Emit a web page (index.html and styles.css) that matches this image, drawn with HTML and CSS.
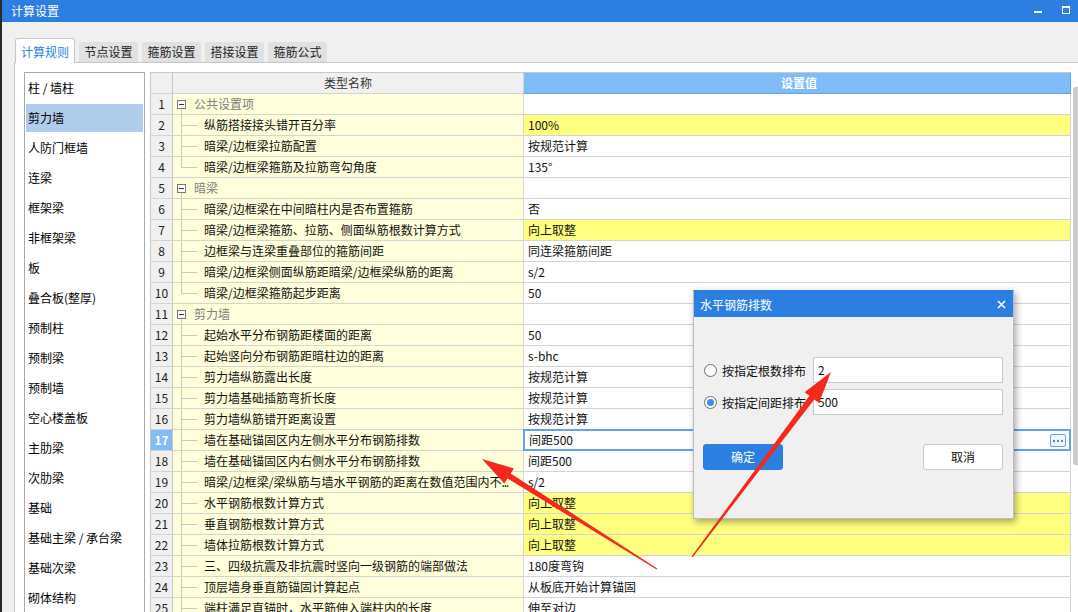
FILE: index.html
```html
<!DOCTYPE html>
<html lang="zh">
<head>
<meta charset="utf-8">
<title>计算设置</title>
<link rel="stylesheet" href="styles.css">
</head>
<body>
<div class="screen">
  <div class="edge"></div>
  <div class="window">
    <div class="titlebar">
      <span class="title">计算设置</span>
      <div class="winctl">
        <span class="min"></span>
        <span class="max"></span>
      </div>
    </div>
    <div class="client">
      <div class="tabs">
        <div class="tab active">计算规则</div>
        <div class="tab">节点设置</div>
        <div class="tab">箍筋设置</div>
        <div class="tab">搭接设置</div>
        <div class="tab">箍筋公式</div>
      </div>
      <div class="panel">
        <ul class="side">
          <li>柱 / 墙柱</li>
          <li class="sel">剪力墙</li>
          <li>人防门框墙</li>
          <li>连梁</li>
          <li>框架梁</li>
          <li>非框架梁</li>
          <li>板</li>
          <li>叠合板(整厚)</li>
          <li>预制柱</li>
          <li>预制梁</li>
          <li>预制墙</li>
          <li>空心楼盖板</li>
          <li>主肋梁</li>
          <li>次肋梁</li>
          <li>基础</li>
          <li>基础主梁 / 承台梁</li>
          <li>基础次梁</li>
          <li>砌体结构</li>
        </ul>
        <div class="grid">
          <div class="row head">
            <div class="c-num"></div>
            <div class="c-name">类型名称</div>
            <div class="c-val">设置值</div>
          </div>

          <div class="row grp"><div class="c-num">1</div><div class="c-name"><span class="box"></span><span class="t-down"></span>公共设置项</div><div class="c-val"></div></div>
          <div class="row"><div class="c-num">2</div><div class="c-name"><span class="t-v"></span><span class="t-h"></span>纵筋搭接接头错开百分率</div><div class="c-val hl">100%</div></div>
          <div class="row"><div class="c-num">3</div><div class="c-name"><span class="t-v"></span><span class="t-h"></span>暗梁/边框梁拉筋配置</div><div class="c-val">按规范计算</div></div>
          <div class="row"><div class="c-num">4</div><div class="c-name"><span class="t-v last"></span><span class="t-h"></span>暗梁/边框梁箍筋及拉筋弯勾角度</div><div class="c-val">135°</div></div>

          <div class="row grp"><div class="c-num">5</div><div class="c-name"><span class="box"></span><span class="t-down"></span>暗梁</div><div class="c-val"></div></div>
          <div class="row"><div class="c-num">6</div><div class="c-name"><span class="t-v"></span><span class="t-h"></span>暗梁/边框梁在中间暗柱内是否布置箍筋</div><div class="c-val">否</div></div>
          <div class="row"><div class="c-num">7</div><div class="c-name"><span class="t-v"></span><span class="t-h"></span>暗梁/边框梁箍筋、拉筋、侧面纵筋根数计算方式</div><div class="c-val hl">向上取整</div></div>
          <div class="row"><div class="c-num">8</div><div class="c-name"><span class="t-v"></span><span class="t-h"></span>边框梁与连梁重叠部位的箍筋间距</div><div class="c-val">同连梁箍筋间距</div></div>
          <div class="row"><div class="c-num">9</div><div class="c-name"><span class="t-v"></span><span class="t-h"></span>暗梁/边框梁侧面纵筋距暗梁/边框梁纵筋的距离</div><div class="c-val">s/2</div></div>
          <div class="row"><div class="c-num">10</div><div class="c-name"><span class="t-v last"></span><span class="t-h"></span>暗梁/边框梁箍筋起步距离</div><div class="c-val">50</div></div>

          <div class="row grp"><div class="c-num">11</div><div class="c-name"><span class="box"></span><span class="t-down"></span>剪力墙</div><div class="c-val"></div></div>
          <div class="row"><div class="c-num">12</div><div class="c-name"><span class="t-v"></span><span class="t-h"></span>起始水平分布钢筋距楼面的距离</div><div class="c-val">50</div></div>
          <div class="row"><div class="c-num">13</div><div class="c-name"><span class="t-v"></span><span class="t-h"></span>起始竖向分布钢筋距暗柱边的距离</div><div class="c-val">s-bhc</div></div>
          <div class="row"><div class="c-num">14</div><div class="c-name"><span class="t-v"></span><span class="t-h"></span>剪力墙纵筋露出长度</div><div class="c-val">按规范计算</div></div>
          <div class="row"><div class="c-num">15</div><div class="c-name"><span class="t-v"></span><span class="t-h"></span>剪力墙基础插筋弯折长度</div><div class="c-val">按规范计算</div></div>
          <div class="row"><div class="c-num">16</div><div class="c-name"><span class="t-v"></span><span class="t-h"></span>剪力墙纵筋错开距离设置</div><div class="c-val">按规范计算</div></div>
          <div class="row cur"><div class="c-num">17</div><div class="c-name"><span class="t-v"></span><span class="t-h"></span>墙在基础锚固区内左侧水平分布钢筋排数</div><div class="c-val edit">间距500<span class="focus"></span><span class="more"><i></i><i></i><i></i></span></div></div>
          <div class="row"><div class="c-num">18</div><div class="c-name"><span class="t-v"></span><span class="t-h"></span>墙在基础锚固区内右侧水平分布钢筋排数</div><div class="c-val">间距500</div></div>
          <div class="row"><div class="c-num">19</div><div class="c-name"><span class="t-v"></span><span class="t-h"></span>暗梁/边框梁/梁纵筋与墙水平钢筋的距离在数值范围内不<span class="dots">...</span></div><div class="c-val">s/2</div></div>
          <div class="row"><div class="c-num">20</div><div class="c-name"><span class="t-v"></span><span class="t-h"></span>水平钢筋根数计算方式</div><div class="c-val hl">向上取整</div></div>
          <div class="row"><div class="c-num">21</div><div class="c-name"><span class="t-v"></span><span class="t-h"></span>垂直钢筋根数计算方式</div><div class="c-val hl">向上取整</div></div>
          <div class="row"><div class="c-num">22</div><div class="c-name"><span class="t-v"></span><span class="t-h"></span>墙体拉筋根数计算方式</div><div class="c-val hl">向上取整</div></div>
          <div class="row"><div class="c-num">23</div><div class="c-name"><span class="t-v"></span><span class="t-h"></span>三、四级抗震及非抗震时竖向一级钢筋的端部做法</div><div class="c-val">180度弯钩</div></div>
          <div class="row"><div class="c-num">24</div><div class="c-name"><span class="t-v"></span><span class="t-h"></span>顶层墙身垂直筋锚固计算起点</div><div class="c-val">从板底开始计算锚固</div></div>
          <div class="row"><div class="c-num">25</div><div class="c-name"><span class="t-v"></span><span class="t-h"></span>端柱满足直锚时，水平筋伸入端柱内的长度</div><div class="c-val">伸至对边</div></div>
        </div>
        <div class="vscroll"><div class="thumb"></div></div>
      </div>
    </div>
  </div>
</div>

<div class="dialog">
  <div class="dlg-title">
    <span>水平钢筋排数</span>
    <svg class="close" width="9" height="9" viewBox="0 0 9 9"><path d="M1 1L8 8M8 1L1 8" stroke="#fff" stroke-width="1.6" fill="none"/></svg>
  </div>
  <div class="dlg-body">
    <div class="opt">
      <span class="radio"></span>
      <span class="opt-label">按指定根数排布</span>
      <div class="input">2</div>
    </div>
    <div class="opt">
      <span class="radio on"></span>
      <span class="opt-label">按指定间距排布</span>
      <div class="input">500</div>
    </div>
    <div class="btns">
      <div class="btn primary">确定</div>
      <div class="btn">取消</div>
    </div>
  </div>
</div>

<svg class="arrows" width="1078" height="612" viewBox="0 0 1078 612">
  <polygon fill="#f5281c" points="692.5,557.4 814.2,399.4 819.0,403.0 831,372 804.6,392.2 809.4,395.8 691.5,556.6"/>
  <polygon fill="#f5281c" points="657.3,568.5 510.7,473.5 513.9,468.4 482,459 504.3,483.6 507.5,478.5 656.7,569.5"/>
</svg>
</body>
</html>
```

FILE: styles.css
```css
* { box-sizing: border-box; }
html, body { margin: 0; padding: 0; }
body {
  width: 1078px;
  height: 612px;
  overflow: hidden;
  position: relative;
  background: #f0f0f0;
  font-family: "Noto Sans CJK SC", "Noto Sans", sans-serif;
  font-size: 12px;
  color: #111;
}
.screen { display: flex; height: 612px; }
.edge { width: 2px; flex: none; background: #2a2a2a; }
.window { flex: 1; min-width: 0; display: flex; flex-direction: column; }

.titlebar {
  flex: none;
  height: 22px;
  background: #2c7fe0;
  color: #fff;
  display: flex;
  align-items: center;
  padding-left: 9px;
}
.title { line-height: 22px; }
.winctl { margin-left: auto; display: flex; align-items: center; height: 22px; }
.min { width: 8px; height: 2px; background: #fff; margin-top: 2px; }
.max {
  width: 8px; height: 8px;
  border: 1px solid #fff; border-top-width: 2px;
  margin-left: 20px; margin-right: 8px; margin-top: -2px;
}

.client { flex: 1; min-height: 0; display: flex; flex-direction: column; padding: 16px 0 0 12px; }
.tabs {
  flex: none;
  display: flex; align-items: flex-end; gap: 4px;
  height: 24px; margin-left: 1px;
  position: relative; z-index: 1;
}
.tab {
  width: 59px; height: 20px;
  background: #e1e1e1;
  border-radius: 3px 3px 0 0;
  text-align: center; line-height: 20px; color: #222;
}
.tab.active {
  width: 60px; height: 25px; margin-bottom: -1px;
  background: #fff;
  border: 1px solid #c6c6c6; border-bottom: none;
  color: #2c7fe0; line-height: 26px;
}

.panel {
  flex: 1; min-height: 0;
  display: flex; align-items: flex-start;
  background: #fff;
  border-top: 1px solid #c6c6c6;
  border-left: 1px solid #c6c6c6;
  padding: 9px 0 0 9px;
  overflow: hidden;
}
.side {
  flex: none;
  width: 121px; height: 560px;
  margin: 0 5px 0 0; padding: 1px 0 0 0;
  list-style: none;
  border: 1px solid #a9a9a9;
  display: flex; flex-direction: column; gap: 2px;
  color: #000;
}
.side li { height: 28px; margin: 0 1px; padding-left: 2px; line-height: 28px; white-space: nowrap; }
.side li.sel { background: #b1cdec; }

.grid {
  flex: none;
  width: 921px;
  border-left: 1px solid #c8c8c8;
  border-top: 1px solid #c8c8c8;
}
.row { display: grid; grid-template-columns: 22px 351px 547px; height: 21px; }
.row > div {
  border-right: 1px solid #d4d4d4;
  border-bottom: 1px solid #d4d4d4;
  line-height: 20px;
  white-space: nowrap; overflow: hidden;
}
.c-num { background: #f0f0f0; text-align: center; color: #222; border-right-color: #c8c8c8 !important; }
.c-name { background: #ffffdc; position: relative; padding-left: 31px; color: #111; }
.c-val { background: #fff; padding-left: 4px; color: #111; position: relative; }
.c-val.hl { background: #ffff80; }
.dots { letter-spacing: -1px; }

.head .c-name { background: #f0f0f0; text-align: center; padding-left: 0; color: #333; }
.head .c-val {
  background: #80bcf8; color: #fff; font-weight: bold; text-align: center;
  border-right-color: #62a3ea; border-bottom-color: #62a3ea;
}

.grp .c-name { padding-left: 21px; color: #808080; }
.box {
  position: absolute; left: 4px; top: 6px;
  width: 9px; height: 9px;
  border: 1px solid #7a7a7a; background: #fff;
}
.box::after {
  content: ""; position: absolute; left: 1px; top: 3px; width: 5px; height: 1px; background: #333;
}
.t-down { position: absolute; left: 8px; top: 15px; bottom: -1px; width: 1px; background: #c8c8c8; }
.t-v { position: absolute; left: 8px; top: 0; bottom: -1px; width: 1px; background: #c8c8c8; }
.t-v.last { bottom: auto; height: 10px; }
.t-h { position: absolute; left: 8px; top: 10px; width: 16px; height: 1px; background: #c8c8c8; }

.cur .c-num { background: #80bcf8; color: #fff; font-weight: bold; }
.c-val.edit { padding-left: 5px; overflow: visible; }
.focus {
  position: absolute; left: -1px; right: -1px; top: -1px; bottom: -1px;
  border: 2px solid #62a3ea;
}
.more {
  position: absolute; right: 4px; top: 4px;
  width: 16px; height: 13px;
  border: 1px solid #62a3ea; border-radius: 2px;
  background: #eef4fc;
  display: flex; align-items: center; justify-content: center; gap: 2px;
}
.more i { width: 2px; height: 2px; background: #4a8fdf; }

.vscroll { flex: none; width: 7px; padding: 15px 0 0 2px; }
.thumb { width: 5px; height: 378px; background: #cdcdcd; border-radius: 2px 0 0 2px; }

.dialog {
  position: absolute; left: 693px; top: 290px;
  width: 321px; height: 229px;
  background: #f0f0f0;
  border: 1px solid #bdbdbd; border-top-color: #2c7fe0;
  box-shadow: 2px 3px 7px rgba(0,0,0,0.35);
}
.dlg-title {
  height: 26px;
  background: #2c7fe0; color: #fff;
  display: flex; align-items: center; justify-content: space-between;
  padding: 0 7px 0 6px;
}
.dlg-body { padding: 40px 10px 0 9px; }
.opt { display: flex; align-items: center; height: 26px; margin-bottom: 6px; padding-left: 1px; color: #111; }
.radio {
  width: 13px; height: 13px; border-radius: 50%;
  border: 1px solid #6d6d6d; background: #fff;
  display: flex; align-items: center; justify-content: center;
}
.radio.on::after { content: ""; width: 7px; height: 7px; border-radius: 50%; background: #3f8fe8; }
.opt-label { margin-left: 5px; }
.input {
  margin-left: auto;
  width: 190px; height: 26px;
  border: 1px solid #c9c9c9; background: #fff;
  padding-left: 4px; line-height: 24px; color: #111;
}
.btns { display: flex; justify-content: space-between; margin-top: 29px; }
.btn {
  width: 80px; height: 26px; border-radius: 3px;
  background: #fff; border: 1px solid #c9c9c9;
  text-align: center; line-height: 24px; color: #111;
}
.btn.primary { background: #2c7fe0; border-color: #2c7fe0; color: #fff; }

.arrows { position: absolute; left: 0; top: 0; pointer-events: none; }
```
